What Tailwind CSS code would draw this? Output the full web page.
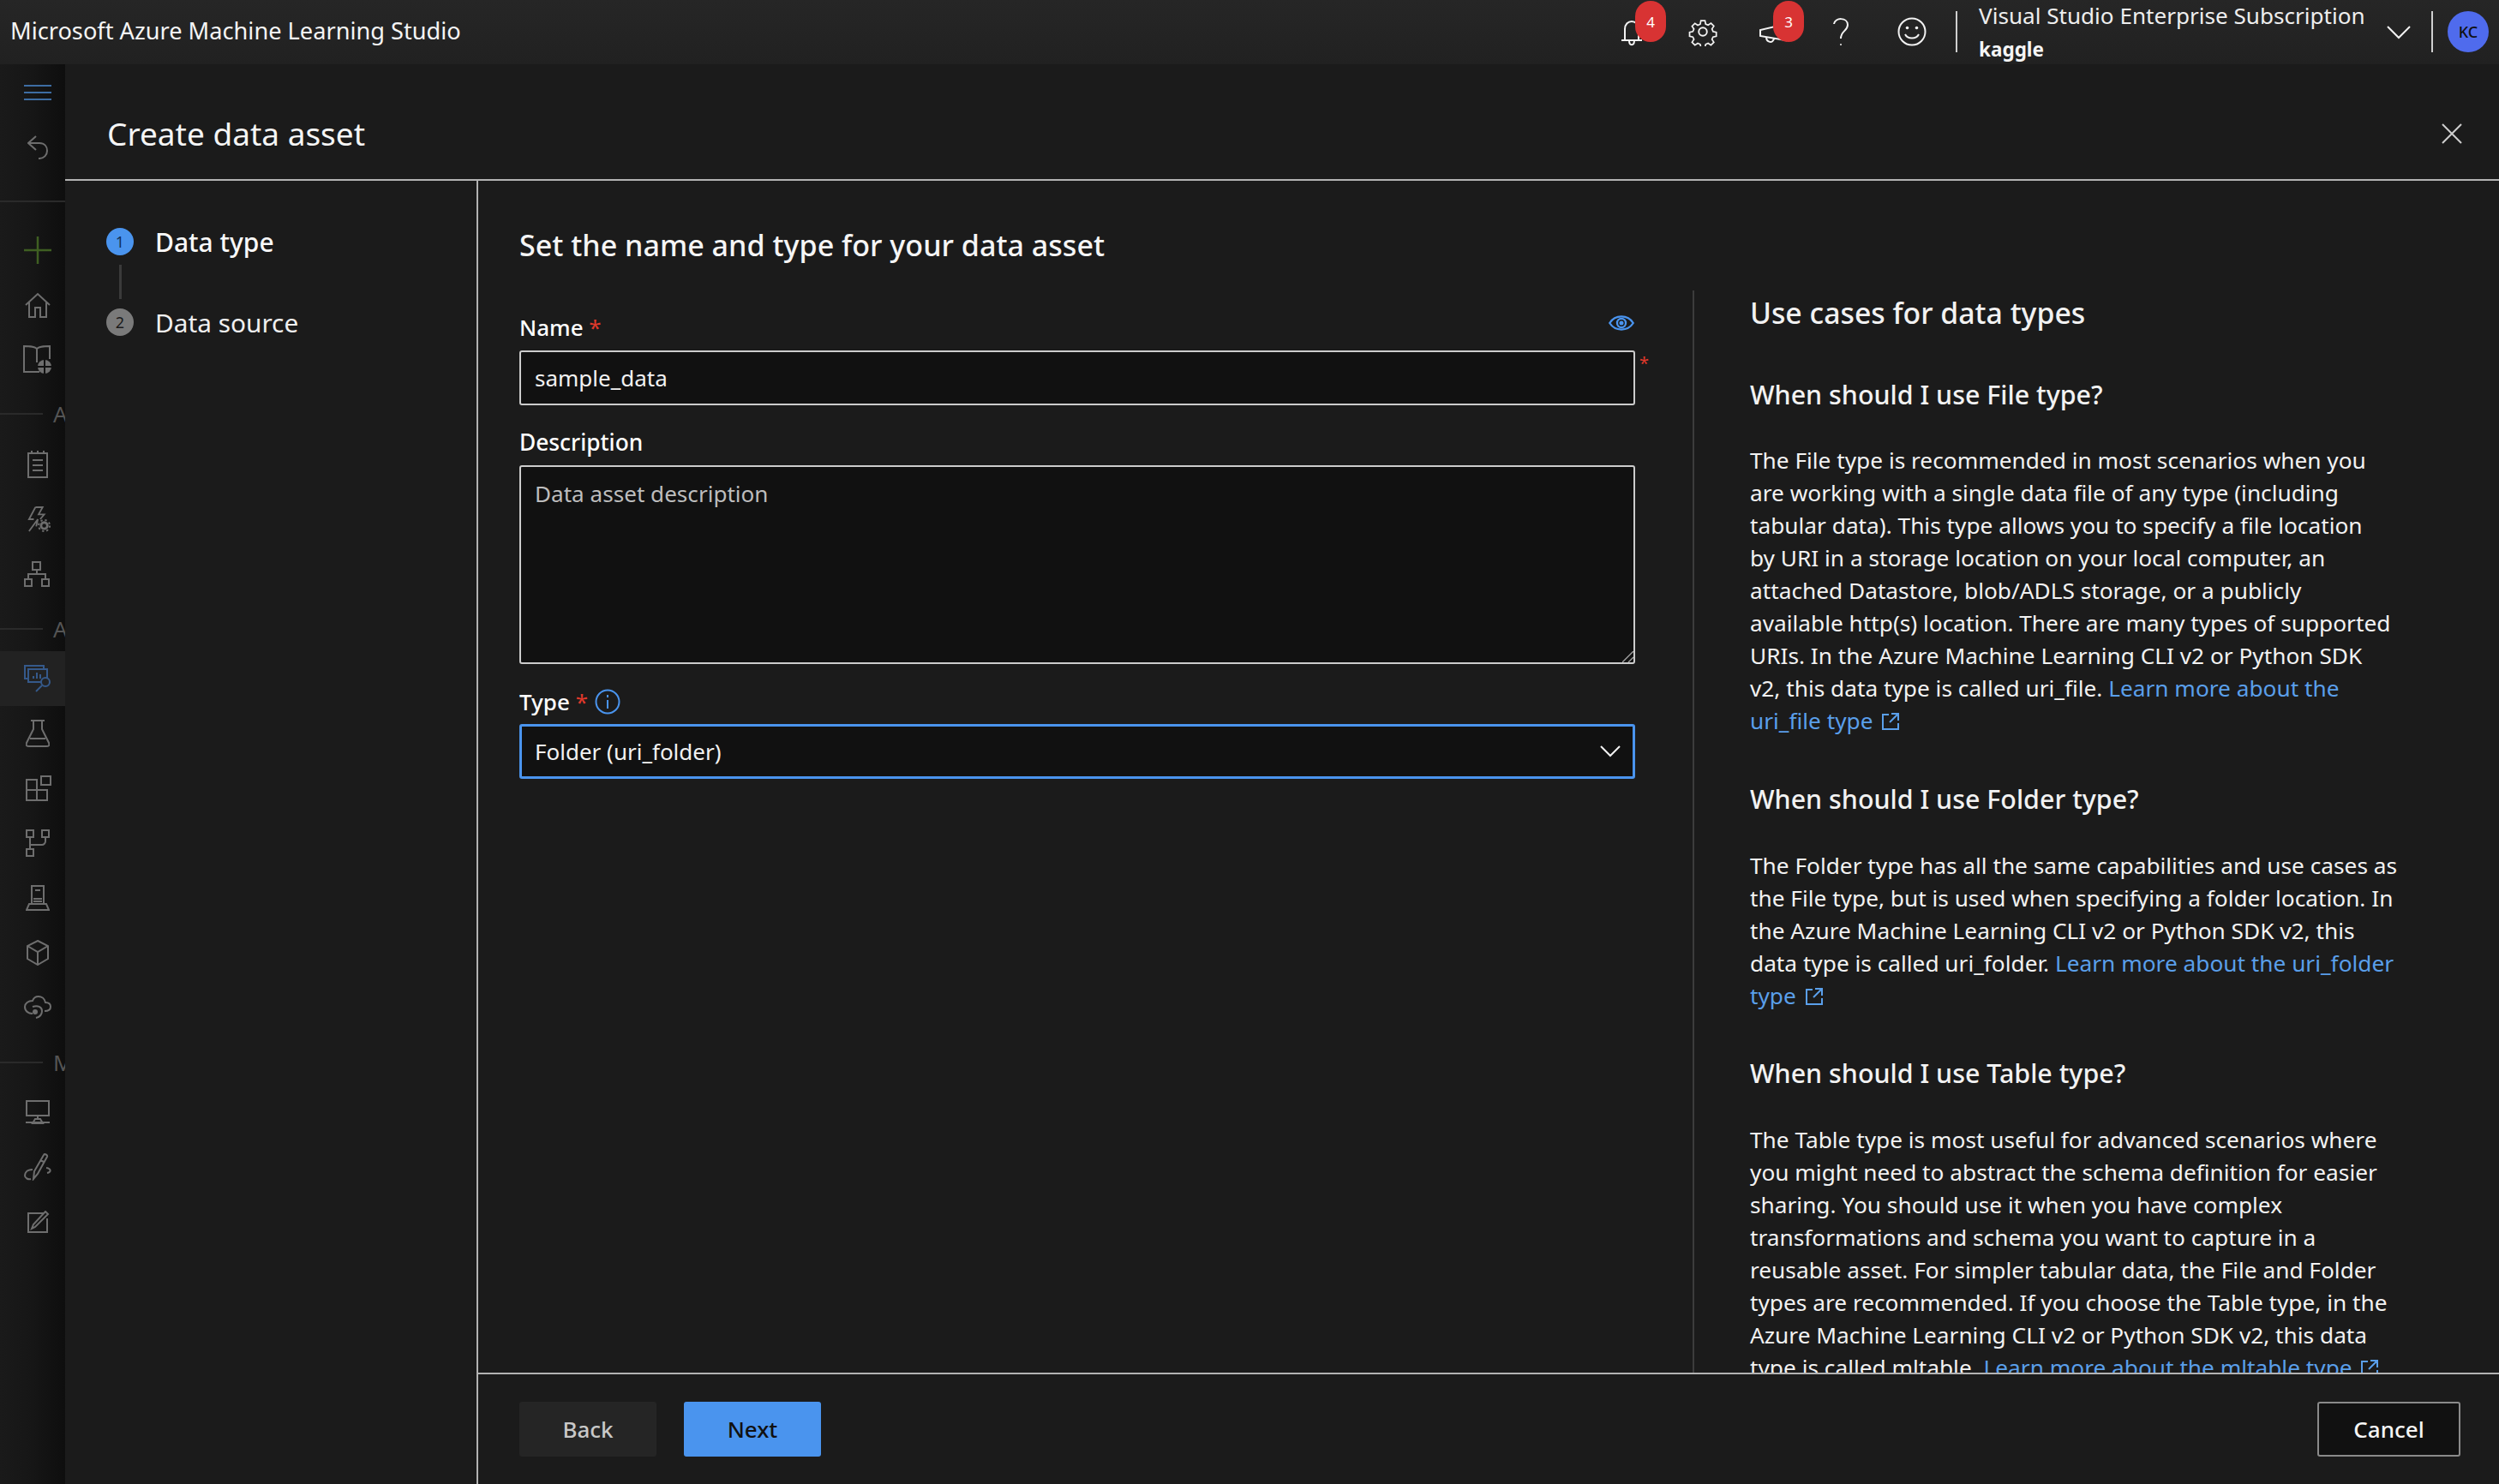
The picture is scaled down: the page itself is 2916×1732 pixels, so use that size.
<!DOCTYPE html>
<html lang="en" class="h-full">
  <head>
    <meta charset="UTF-8" />
    <title>Create data asset - Microsoft Azure Machine Learning Studio</title>
    <script src="https://cdn.jsdelivr.net/npm/@tailwindcss/browser@4"></script>
  </head>
  <body class="h-full overflow-hidden bg-[#1b1b1b] text-white font-['Noto_Sans',sans-serif] text-[26.25px] leading-[38px]">
    <div class="h-[1732px] flex flex-col">
      <!-- top bar -->
      <header class="h-[75px] shrink-0 flex items-center bg-linear-to-b from-[#262626] to-[#212121] relative">
        <div class="pl-[12px] pb-[3px] text-[27.2px] text-[#f5f5f5] flex-1">Microsoft Azure Machine Learning Studio</div>
        <div class="flex items-center h-full">
          <div class="w-[36px] h-[36px] relative mr-[46px] -mt-[2px]">
            <svg viewBox="0 0 36 36" class="w-[36px] h-[36px]" fill="none" stroke="#f2f2f2" stroke-width="2"><path d="M4 28h24M8 28V15c0-6 4-9 8-9s8 3 8 9v13M13 28c0 7 6 7 6 0"/></svg>
            <span class="absolute left-[20px] top-[-18px] w-[36px] h-[48px] rounded-full bg-[#d83333] text-[17px] leading-[50px] text-center">4</span>
          </div>
          <svg viewBox="0 0 32 32" class="w-[34px] h-[34px] mr-[48px] -mt-[2px]" fill="none" stroke="#f2f2f2" stroke-width="1.8"><circle cx="16" cy="16" r="4.5"/><path d="M13.5 2.5h5l.8 4 3 1.3 3.5-2.3 3.5 3.5-2.3 3.5 1.3 3v.2l4 .8v5l-4 .8-1.3 3 2.3 3.5-3.500 3.500-3.500-2.300-3 1.300-.8 4h-5l-.8-4-3-1.300-3.500 2.300-3.500-3.500 2.300-3.500-1.300-3-4-.8v-5l4-.8 1.300-3-2.300-3.500 3.500-3.500 3.500 2.300 3-1.300z" transform="translate(1.700 1.700) scale(.9)"/></svg>
          <div class="w-[36px] h-[36px] relative mr-[48px] -mt-[2px]">
            <svg viewBox="0 0 36 36" class="w-[36px] h-[36px]" fill="none" stroke="#f2f2f2" stroke-width="2"><path d="M2 16v7l30 5V9zM9 24c0 7 8 8 9 2"/></svg>
            <span class="absolute left-[17px] top-[-18px] w-[36px] h-[48px] rounded-full bg-[#d83333] text-[17px] leading-[50px] text-center">3</span>
          </div>
          <svg viewBox="0 0 24 36" class="w-[24px] h-[36px] mr-[54px] -mt-[2px]" fill="none" stroke="#f2f2f2" stroke-width="2"><path d="M4 9c1-8 16-8 16 1 0 7-8 7-8 16"/><circle cx="12" cy="33" r="1" fill="#f2f2f2" stroke="none"/></svg>
          <svg viewBox="0 0 34 34" class="w-[34px] h-[34px] mr-[34px] -mt-[2px]" fill="none" stroke="#f2f2f2" stroke-width="2"><circle cx="17" cy="17" r="15.500"/><path d="M9 20c3 6 13 6 16 0"/><circle cx="11.500" cy="12.500" r="1.800" fill="#f2f2f2" stroke="none"/><circle cx="22.500" cy="12.500" r="1.800" fill="#f2f2f2" stroke="none"/></svg>
          <div class="w-[2px] h-[48px] bg-[#cfcfcf] mr-[25px] -mt-[2px]"></div>
          <div class="w-[476px] h-full flex flex-col -mt-[1px]">
            <div class="text-[26.1px] leading-[36px] whitespace-nowrap text-[#eeeeee]">Visual Studio Enterprise Subscription</div>
            <div class="text-[22.5px] leading-[44px] font-bold text-[#f5f5f5]">kaggle</div>
          </div>
          <svg viewBox="0 0 28 16" class="w-[28px] h-[16px] mr-[24px]" fill="none" stroke="#f2f2f2" stroke-width="2"><path d="M1 1l13 13L27 1"/></svg>
          <div class="w-[2px] h-[48px] bg-[#cfcfcf] mr-[17px] -mt-[2px]"></div>
          <div class="w-[48px] h-[48px] rounded-full bg-[#4f6bed] text-[#101010] text-[18px] font-medium flex items-center justify-center mr-[12px] -mt-[2px]">KC</div>
        </div>
      </header>

      <div class="flex-1 flex min-h-0">
        <!-- left nav, dimmed behind the panel -->
        <nav class="w-[76px] shrink-0 overflow-hidden bg-linear-to-r from-[#1a1a1a] via-[#161616] to-[#0e0e0e] text-[#6e6e6e] pt-[1px]">
          <div class="h-[64px] flex items-center pl-[28px]">
            <svg viewBox="0 0 32 18" class="w-[32px] h-[18px]" fill="none" stroke="#3d6da3" stroke-width="2"><path d="M0 1h32M0 9h32M0 17h32"/></svg>
          </div>
          <div class="h-[64px] flex items-center pl-[32px]">
            <svg viewBox="0 0 24 28" class="w-[24px] h-[28px]" fill="none" stroke="currentColor" stroke-width="2"><path d="M10 1L1 9l9 8M1 9h13c6 0 9 4 9 9s-4 9-9 9h-1"/></svg>
          </div>
          <div class="h-[56px] pt-[30px] overflow-hidden"><div class="h-[2px] bg-[#2a2a2a]"></div></div>
          <div class="h-[64px] flex items-center pl-[28px]">
            <svg viewBox="0 0 32 32" class="w-[32px] h-[32px]" fill="none" stroke="#3f5f22" stroke-width="2.500"><path d="M16 0v32M0 16h32"/></svg>
          </div>
          <div class="h-[64px] flex items-center pl-[29px]">
            <svg viewBox="0 0 30 30" class="w-[30px] h-[30px]" fill="none" stroke="currentColor" stroke-width="2"><path d="M1 15L15 2l14 13M5 12v17h7V18h6v11h7V12"/></svg>
          </div>
          <div class="h-[64px] flex items-center pl-[27px]">
            <svg viewBox="0 0 36 34" class="w-[36px] h-[34px]" fill="none" stroke="currentColor" stroke-width="2"><path d="M16 4c-3-3-8-3-15-3v30h18M16 4c3-3 8-3 15-3v15M16 4v16"/><circle cx="25" cy="25" r="8" fill="currentColor" stroke="none"/><path d="M25 17v16M17 25h16" stroke="#111"/></svg>
          </div>
          <div class="h-[58px] pt-[30px] flex items-start gap-[12px] overflow-hidden">
            <div class="w-[50px] h-[2px] shrink-0 bg-[#2a2a2a]"></div>
            <span class="text-[26px] leading-[2px] text-[#555555]">A</span>
          </div>
          <div class="h-[64px] flex items-center pl-[32px]">
            <svg viewBox="0 0 24 32" class="w-[24px] h-[32px]" fill="none" stroke="currentColor" stroke-width="2"><rect x="1" y="3" width="22" height="28"/><path d="M6 11h12M6 17h12M6 23h12M5 0v3M12 0v3M19 0v3"/></svg>
          </div>
          <div class="h-[64px] flex items-center pl-[32px]">
            <svg viewBox="0 0 30 32" class="w-[28px] h-[32px]" fill="none" stroke="currentColor" stroke-width="2"><path d="M10 1h9l-5 9h7l-5 6M8 16H2l8-15M2 31l11-15-2 9"/><circle cx="21" cy="24" r="4" stroke-width="3"/><circle cx="21" cy="24" r="7" stroke-width="2" stroke-dasharray="2.500 3"/></svg>
          </div>
          <div class="h-[64px] flex items-center pl-[28px]">
            <svg viewBox="0 0 30 30" class="w-[30px] h-[30px]" fill="none" stroke="currentColor" stroke-width="2"><rect x="10" y="1" width="9" height="9"/><rect x="1" y="21" width="8" height="8"/><rect x="21" y="21" width="8" height="8"/><path d="M15 10v5M5 21v-6h20v6"/></svg>
          </div>
          <div class="h-[58px] pt-[31px] flex items-start gap-[12px] overflow-hidden">
            <div class="w-[50px] h-[2px] shrink-0 bg-[#2a2a2a]"></div>
            <span class="text-[26px] leading-[2px] text-[#555555]">A</span>
          </div>
          <div class="h-[64px] flex items-center pl-[28px] bg-[#222222]">
            <svg viewBox="0 0 32 32" class="w-[32px] h-[32px]" fill="none" stroke="#35598a" stroke-width="2"><path d="M5 16H1V1h22v3"/><path d="M20 20H5V5h22v10"/><path d="M11 16v-3M15 16V9M19 16v-5" stroke-width="2"/><circle cx="25" cy="20" r="5"/><path d="M21 24l-7 7"/></svg>
          </div>
          <div class="h-[64px] flex items-center pl-[30px]">
            <svg viewBox="0 0 28 32" class="w-[28px] h-[32px]" fill="none" stroke="currentColor" stroke-width="2"><path d="M6 1h16M9 1v10L1 27c-1 3 0 4 3 4h20c3 0 4-1 3-4l-8-16V1M5 22h18"/></svg>
          </div>
          <div class="h-[64px] flex items-center pl-[30px]">
            <svg viewBox="0 0 30 30" class="w-[30px] h-[30px]" fill="none" stroke="currentColor" stroke-width="2"><path d="M1 5h12v24H1zM1 17h24v12H13M13 17V5"/><rect x="18" y="1" width="11" height="10"/></svg>
          </div>
          <div class="h-[64px] flex items-center pl-[30px]">
            <svg viewBox="0 0 28 32" class="w-[28px] h-[32px]" fill="none" stroke="currentColor" stroke-width="2"><rect x="1" y="1" width="8" height="8"/><rect x="19" y="1" width="8" height="8"/><rect x="1" y="23" width="8" height="8"/><path d="M5 9v14M5 18h14c2 0 4-2 4-4V9"/></svg>
          </div>
          <div class="h-[64px] flex items-center pl-[30px]">
            <svg viewBox="0 0 28 30" class="w-[28px] h-[30px]" fill="none" stroke="currentColor" stroke-width="2"><path d="M7 22V1h14v21zM11 6h6M9 16h10M9 19h10M4 22h20l3 7H1z"/></svg>
          </div>
          <div class="h-[64px] flex items-center pl-[30px]">
            <svg viewBox="0 0 28 30" class="w-[28px] h-[30px]" fill="none" stroke="currentColor" stroke-width="2"><path d="M14 1l12 6v15l-12 7-12-7V7zM2 7l12 7 12-7M14 14v15"/></svg>
          </div>
          <div class="h-[64px] flex items-center pl-[28px]">
            <svg viewBox="0 0 32 28" class="w-[32px] h-[28px]" fill="none" stroke="currentColor" stroke-width="2"><path d="M24 18c5 0 7-2 7-5s-2-5-6-5c-1-5-5-7-8-7-4 0-6 2-7 5-5 0-9 3-9 7 0 5 4 8 9 8"/><path d="M10 13c6-2 11 0 11 5s-3 7-7 8"/><circle cx="13" cy="19" r="3" fill="currentColor" stroke="none"/></svg>
          </div>
          <div class="h-[58px] pt-[31px] flex items-start gap-[12px] overflow-hidden">
            <div class="w-[50px] h-[2px] shrink-0 bg-[#2a2a2a]"></div>
            <span class="text-[26px] leading-[2px] text-[#555555]">M</span>
          </div>
          <div class="h-[64px] flex items-center pl-[30px]">
            <svg viewBox="0 0 28 28" class="w-[28px] h-[28px]" fill="none" stroke="currentColor" stroke-width="2"><rect x="1" y="1" width="26" height="17"/><path d="M14 18v4M0 26h28M8 27l3-5h6l3 5z"/></svg>
          </div>
          <div class="h-[64px] flex items-center pl-[28px]">
            <svg viewBox="0 0 32 32" class="w-[32px] h-[32px]" fill="none" stroke="currentColor" stroke-width="2"><path d="M11 30l1-9 11-19c1-2 5 0 4 2L16 24zM19 8l4 2M26 17c6 1 6 5 1 6M10 19c-7 0-9 4-9 7s4 5 7 4"/></svg>
          </div>
          <div class="h-[64px] flex items-center pl-[32px]">
            <svg viewBox="0 0 26 26" class="w-[26px] h-[26px]" fill="none" stroke="currentColor" stroke-width="2"><path d="M19 3H1v22h22V9"/><path d="M5 21l2-5L21 1l3 3L9 19z"/></svg>
          </div>
        </nav>

        <!-- create data asset panel -->
        <main class="flex-1 min-w-0 flex flex-col bg-[#1b1b1b]">
          <div class="h-[136px] shrink-0 flex items-center justify-between border-b-2 border-[#b3b3b3] pt-[28px] pl-[49px] pr-[43px]">
            <h1 class="text-[37px] leading-[48px] text-[#f5f5f5]">Create data asset</h1>
            <svg viewBox="0 0 24 24" class="w-[24px] h-[24px]" fill="none" stroke="#cfcfcf" stroke-width="2"><path d="M1 1l22 22M23 1L1 23"/></svg>
          </div>

          <div class="flex-1 flex min-h-0">
            <!-- steps -->
            <aside class="w-[482px] shrink-0 border-r-2 border-[#b3b3b3] pl-[48px] pt-[55px]">
              <div class="flex items-center gap-[25px] h-[32px]">
                <span class="w-[32px] h-[32px] rounded-full bg-[#4a94ee] text-[#12315a] text-[18px] leading-[32px] text-center">1</span>
                <span class="text-[30px] font-medium text-[#f8f8f8] mt-[2px]">Data type</span>
              </div>
              <div class="w-[3px] h-[40px] bg-[#3a3a3a] ml-[15px] mt-[11px] mb-[11px]"></div>
              <div class="flex items-center gap-[25px] h-[32px]">
                <span class="w-[32px] h-[32px] rounded-full bg-[#7a7a7a] text-[#1b1b1b] text-[18px] leading-[32px] text-center">2</span>
                <span class="text-[29.8px] text-[#f0f0f0] mt-[2px]">Data source</span>
              </div>
            </aside>

            <div class="flex-1 min-w-0 flex flex-col">
              <div class="h-[1391px] shrink-0 flex overflow-hidden pl-[48px]">
                <!-- form -->
                <form class="w-[1302px] shrink-0 pt-[49px]">
                  <h2 class="text-[34.1px] leading-[50px] font-medium text-[#f5f5f5] whitespace-nowrap pt-[1px] h-[48px]">Set the name and type for your data asset</h2>
                  <div class="mt-[54px] h-[38px] flex items-center justify-between">
                    <label for="name" class="text-[26px] font-medium pt-[1px]">Name <span class="text-[#e0392b] font-normal">*</span></label>
                    <svg viewBox="0 0 32 24" class="w-[32px] h-[22px] -mt-[8px]" fill="none" stroke="#4a94ee" stroke-width="2.500"><path d="M1 12C8 1 24 1 31 12 24 23 8 23 1 12z"/><circle cx="16" cy="12" r="5.500"/><circle cx="16" cy="12" r="1.500" fill="#4a94ee"/></svg>
                  </div>
                  <div class="relative mt-[9px]">
                    <input id="name" value="sample_data" class="block w-full h-[64px] bg-[#111111] border-2 border-[#cccccc] rounded-[3px] px-[16px] text-[26px] text-[#f2f2f2] outline-none" />
                    <span class="absolute right-[-16px] top-[-4px] text-[20px] text-[#e0392b]">*</span>
                  </div>
                  <label for="description" class="block mt-[24px] h-[38px] text-[26.3px] font-medium">Description</label>
                  <div class="relative mt-[8px]">
                    <textarea id="description" placeholder="Data asset description" class="block w-full h-[232px] bg-[#111111] border-2 border-[#cccccc] rounded-[3px] px-[16px] py-[12px] text-[26.1px] leading-[38px] placeholder:text-[#bdbdbd] outline-none resize-none"></textarea>
                    <svg viewBox="0 0 13 13" class="absolute right-[2px] bottom-[2px] w-[13px] h-[13px]" fill="none" stroke="#a8a8a8" stroke-width="1.300"><path d="M0 13L13 0M7 13l6-6"/></svg>
                  </div>
                  <div class="mt-[25px] h-[38px] flex items-center gap-[8px]">
                    <label class="text-[26px] font-medium">Type <span class="text-[#e0392b] font-normal">*</span></label>
                    <svg viewBox="0 0 30 30" class="w-[30px] h-[30px]" fill="none" stroke="#4a94ee" stroke-width="2"><circle cx="15" cy="15" r="13.500"/><path d="M15 13v10M15 7v3"/></svg>
                  </div>
                  <div class="mt-[7px] h-[64px] bg-[#111111] border-[3px] border-[#4a94ee] rounded-[3px] pl-[15px] pr-[14px] flex items-center justify-between">
                    <span class="text-[26px] text-[#f2f2f2]">Folder (uri_folder)</span>
                    <svg viewBox="0 0 24 14" class="w-[24px] h-[14px]" fill="none" stroke="#f2f2f2" stroke-width="2"><path d="M1 1l11 11L23 1"/></svg>
                  </div>
                </form>

                <!-- help text -->
                <section class="ml-[67px] mt-[128px] border-l-2 border-[#3c3c3c] pl-[65px] whitespace-nowrap text-[#f2f2f2]">
                  <h3 class="mt-[4px] text-[33.8px] leading-[44px] font-medium">Use cases for data types</h3>
                  <h4 class="mt-[52px] text-[30.4px] leading-[44px] font-medium">When should I use File type?</h4>
                  <p class="mt-[35px]">
                    The File type is recommended in most scenarios when you<br />
                    are working with a single data file of any type (including<br />
                    tabular data). This type allows you to specify a file location<br />
                    by URI in a storage location on your local computer, an<br />
                    attached Datastore, blob/ADLS storage, or a publicly<br />
                    available http(s) location. There are many types of supported<br />
                    URIs. In the Azure Machine Learning CLI v2 or Python SDK<br />
                    v2, this data type is called uri_file. <a href="#" class="text-[#5a9fea]">Learn more about the<br />uri_file type
                    <svg viewBox="0 0 20 20" class="inline w-[20px] h-[20px] ml-[4px] align-[-1px]" fill="none" stroke="currentColor" stroke-width="2"><path d="M8 2H1v17h18v-7M11 1h8v8M19 1L9 11"/></svg></a>
                  </p>
                  <h4 class="mt-[51px] text-[30.4px] leading-[44px] font-medium">When should I use Folder type?</h4>
                  <p class="mt-[36px]">
                    The Folder type has all the same capabilities and use cases as<br />
                    the File type, but is used when specifying a folder location. In<br />
                    the Azure Machine Learning CLI v2 or Python SDK v2, this<br />
                    data type is called uri_folder. <a href="#" class="text-[#5a9fea]">Learn more about the uri_folder<br />type
                    <svg viewBox="0 0 20 20" class="inline w-[20px] h-[20px] ml-[4px] align-[-1px]" fill="none" stroke="currentColor" stroke-width="2"><path d="M8 2H1v17h18v-7M11 1h8v8M19 1L9 11"/></svg></a>
                  </p>
                  <h4 class="mt-[50px] text-[30.4px] leading-[44px] font-medium">When should I use Table type?</h4>
                  <p class="mt-[36px]">
                    The Table type is most useful for advanced scenarios where<br />
                    you might need to abstract the schema definition for easier<br />
                    sharing. You should use it when you have complex<br />
                    transformations and schema you want to capture in a<br />
                    reusable asset. For simpler tabular data, the File and Folder<br />
                    types are recommended. If you choose the Table type, in the<br />
                    Azure Machine Learning CLI v2 or Python SDK v2, this data<br />
                    type is called mltable. <a href="#" class="text-[#5a9fea]">Learn more about the mltable type
                    <svg viewBox="0 0 20 20" class="inline w-[20px] h-[20px] ml-[4px] align-[-1px]" fill="none" stroke="currentColor" stroke-width="2"><path d="M8 2H1v17h18v-7M11 1h8v8M19 1L9 11"/></svg></a>
                  </p>
                </section>
              </div>

              <!-- footer -->
              <div class="flex-1 border-t-2 border-[#b3b3b3] pt-[32px] pl-[48px] pr-[45px] flex items-start gap-[32px]">
                <button class="w-[160px] h-[64px] rounded-[3px] bg-[#252525] text-[#c8c8c8] text-[26px] font-medium">Back</button>
                <button class="w-[160px] h-[64px] rounded-[3px] bg-[#4a94ee] text-[#111111] text-[26px] font-medium">Next</button>
                <button class="ml-auto w-[167px] h-[64px] rounded-[3px] bg-[#111111] border-2 border-[#8a8a8a] text-[#f5f5f5] text-[26px] font-medium">Cancel</button>
              </div>
            </div>
          </div>
        </main>
      </div>
    </div>
  </body>
</html>
